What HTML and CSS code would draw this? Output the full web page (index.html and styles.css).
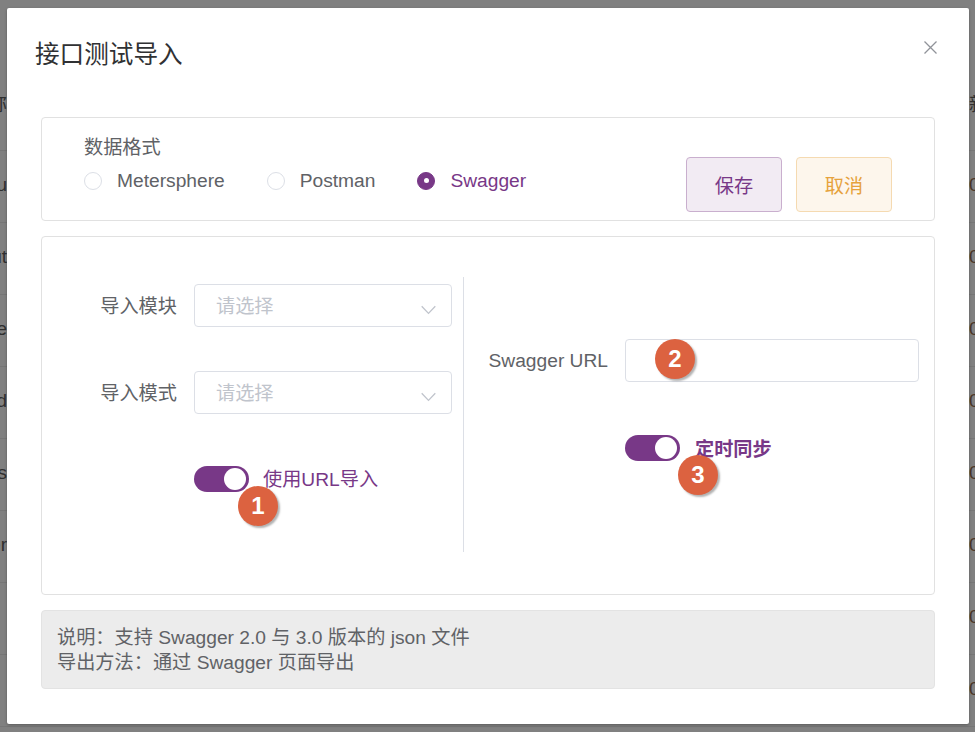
FILE: index.html
```html
<!DOCTYPE html>
<html lang="zh-CN">
<head>
<meta charset="utf-8">
<title>接口测试导入</title>
<link rel="stylesheet" href="styles.css">
</head>
<body>
<div class="page">
  <div class="bg-row bg-head"><span class="bg-l">名称</span><span class="bg-r">新</span></div>
  <div class="bg-row"><span class="bg-l">du</span><span class="bg-r bg-o">0</span></div>
  <div class="bg-row"><span class="bg-l">put</span><span class="bg-r bg-o">0</span></div>
  <div class="bg-row"><span class="bg-l">ame</span><span class="bg-r bg-o">0</span></div>
  <div class="bg-row"><span class="bg-l">add</span><span class="bg-r bg-o">0</span></div>
  <div class="bg-row"><span class="bg-l">tus</span><span class="bg-r bg-o">0</span></div>
  <div class="bg-row"><span class="bg-l">per</span><span class="bg-r bg-o">0</span></div>
  <div class="bg-row"><span class="bg-l"></span><span class="bg-r bg-o">0</span></div>
  <div class="bg-row"><span class="bg-l"></span><span class="bg-r bg-o">0</span></div>
</div>

<div class="dialog">
  <div class="dialog-header">
    <span class="dialog-title">接口测试导入</span>
    <svg class="close" width="13" height="13" viewBox="0 0 13 13"><path d="M0.5 0.5L12.5 12.5M12.5 0.5L0.5 12.5" stroke="#909399" stroke-width="1.3" fill="none"/></svg>
  </div>
  <div class="dialog-body">
    <div class="box box-format">
      <div class="format-left">
        <div class="format-label">数据格式</div>
        <div class="radios">
          <label class="radio"><span class="radio-dot"></span><span class="radio-text">Metersphere</span></label>
          <label class="radio"><span class="radio-dot"></span><span class="radio-text">Postman</span></label>
          <label class="radio checked"><span class="radio-dot"></span><span class="radio-text">Swagger</span></label>
        </div>
      </div>
      <div class="buttons">
        <button class="btn btn-save">保存</button>
        <button class="btn btn-cancel">取消</button>
      </div>
    </div>

    <div class="box box-form">
      <div class="col col-left">
        <div class="form-row">
          <span class="form-label">导入模块</span>
          <div class="select"><span class="placeholder">请选择</span>
            <svg class="arrow" width="15" height="10" viewBox="0 0 15 10"><path d="M0.7 1.2L7.5 8.4L14.3 1.2" stroke="#c0c4cc" stroke-width="1.3" fill="none"/></svg>
          </div>
        </div>
        <div class="form-row row-gap">
          <span class="form-label">导入模式</span>
          <div class="select"><span class="placeholder">请选择</span>
            <svg class="arrow" width="15" height="10" viewBox="0 0 15 10"><path d="M0.7 1.2L7.5 8.4L14.3 1.2" stroke="#c0c4cc" stroke-width="1.3" fill="none"/></svg>
          </div>
        </div>
        <div class="switch-row switch-row-left">
          <span class="switch"><span class="knob"></span><span class="badge badge-1">1</span></span>
          <span class="switch-label">使用URL导入</span>
        </div>
      </div>
      <div class="divider"></div>
      <div class="col col-right">
        <div class="form-row">
          <span class="form-label form-label-wide">Swagger URL</span>
          <div class="input"><span class="badge badge-2">2</span></div>
        </div>
        <div class="switch-row switch-row-right">
          <span class="switch"><span class="knob"></span><span class="badge badge-3">3</span></span>
          <span class="switch-label bold">定时同步</span>
        </div>
      </div>
    </div>

    <div class="note">
      <div>说明：支持 Swagger 2.0 与 3.0 版本的 json 文件</div>
      <div>导出方法：通过 Swagger 页面导出</div>
    </div>
  </div>
</div>
</body>
</html>
```

FILE: styles.css
```css
* { box-sizing: border-box; }
html, body {
  margin: 0;
  padding: 0;
  width: 975px;
  height: 732px;
  overflow: hidden;
  background: #808080;
  font-family: "Liberation Sans", Arial, "Noto Sans CJK SC", sans-serif;
}

/* dimmed page behind the modal */
.page {
  padding-top: 71px;
}
.bg-row {
  height: 72px;
  border-bottom: 1px solid #767676;
  display: flex;
  justify-content: space-between;
  align-items: flex-start;
  padding-top: 24px;
  font-size: 19px;
  line-height: 20px;
  color: #2f2f2f;
}
.bg-head { height: 80px; }
.bg-l {
  width: 7px;
  overflow: hidden;
  display: flex;
  justify-content: flex-end;
  white-space: nowrap;
}
.bg-r {
  width: 6px;
  overflow: hidden;
  white-space: nowrap;
}
.bg-o { color: #4a3626; }

/* dialog */
.dialog {
  position: absolute;
  left: 7px;
  top: 8px;
  width: 962px;
  height: 716px;
  background: #fff;
  border-radius: 2px;
  box-shadow: 0 1px 3px rgba(0,0,0,0.3);
}
.dialog-header {
  position: relative;
  padding: 29px 28px 50px;
}
.dialog-title {
  display: block;
  font-size: 24.6px;
  line-height: 30px;
  color: #303133;
  font-family: "Noto Sans CJK SC", sans-serif;
}
.close {
  position: absolute;
  top: 33px;
  right: 32px;
}
.dialog-body {
  padding: 0 34px;
}

.box {
  border: 1px solid #e1e1e1;
  border-radius: 4px;
}

/* format box */
.box-format {
  display: flex;
  align-items: flex-start;
  justify-content: space-between;
  padding: 16px 42px 8px 42px;
}
.format-label {
  font-size: 19.2px;
  line-height: 25px;
  color: #606266;
  font-family: "Noto Sans CJK SC", sans-serif;
}
.radios {
  display: flex;
  margin-top: 9px;
}
.radio {
  display: flex;
  align-items: center;
  margin-right: 42px;
  font-size: 19.2px;
  line-height: 25px;
  color: #606266;
}
.radio-dot {
  width: 18px;
  height: 18px;
  border: 1px solid #dcdfe6;
  border-radius: 50%;
  background: #fff;
  margin-right: 15px;
  display: flex;
  align-items: center;
  justify-content: center;
}
.radio.checked .radio-dot {
  background: #783887;
  border-color: #783887;
}
.radio.checked .radio-dot::after {
  content: "";
  width: 5px;
  height: 5px;
  border-radius: 50%;
  background: #fff;
}
.radio.checked .radio-text { color: #783887; }

.buttons {
  display: flex;
  gap: 14px;
  margin-top: 23px;
}
.btn {
  width: 96px;
  height: 55px;
  border-radius: 4px;
  font-size: 19.2px;
  font-family: "Noto Sans CJK SC", sans-serif;
  padding: 0;
}
.btn-save {
  background: #f2ebf3;
  border: 1px solid #c9afce;
  color: #783887;
}
.btn-cancel {
  background: #fdf6ec;
  border: 1px solid #f5dab1;
  color: #e6a23c;
}

/* form box */
.box-form {
  margin-top: 15px;
  display: flex;
  padding: 40px 0 42px;
}
.col { height: 275px; }
.col-left {
  width: 421px;
  padding-top: 7px;
}
.divider {
  width: 1px;
  height: 275px;
  background: #dcdfe6;
}
.col-right {
  width: 470px;
  padding-top: 62px;
}
.form-row {
  display: flex;
  align-items: center;
}
.row-gap { margin-top: 44px; }
.form-label {
  width: 152px;
  padding-right: 17px;
  text-align: right;
  font-size: 19.2px;
  line-height: 43px;
  color: #606266;
  font-family: "Noto Sans CJK SC", sans-serif;
}
.form-label-wide {
  width: 161px;
  font-family: "Liberation Sans", Arial, sans-serif;
}
.select {
  position: relative;
  width: 258px;
  height: 43px;
  border: 1px solid #dcdfe6;
  border-radius: 4px;
  display: flex;
  align-items: center;
  padding-left: 21px;
}
.placeholder {
  font-size: 19.2px;
  color: #c0c4cc;
  font-family: "Noto Sans CJK SC", sans-serif;
  line-height: 25px;
}
.arrow {
  position: absolute;
  right: 15px;
  top: 20px;
}
.input {
  position: relative;
  width: 294px;
  height: 43px;
  border: 1px solid #dcdfe6;
  border-radius: 4px;
}

.switch-row {
  display: flex;
  align-items: center;
}
.switch-row-left {
  margin-top: 52px;
  margin-left: 152px;
}
.switch-row-right {
  margin-top: 53px;
  margin-left: 161px;
}
.switch {
  position: relative;
  width: 55px;
  height: 26px;
  border-radius: 13px;
  background: #783887;
  flex: none;
}
.knob {
  position: absolute;
  right: 3px;
  top: 2px;
  width: 22px;
  height: 22px;
  border-radius: 50%;
  background: #fff;
}
.switch-label {
  margin-left: 14px;
  font-size: 19.2px;
  line-height: 25px;
  color: #783887;
}
.switch-label.bold {
  margin-left: 15px;
  font-weight: bold;
  font-family: "Noto Sans CJK SC", sans-serif;
}

.badge {
  position: absolute;
  width: 40px;
  height: 40px;
  border-radius: 50%;
  background: #dc6240;
  color: #fff;
  font-weight: bold;
  font-size: 24px;
  line-height: 40px;
  text-align: center;
  font-family: "Liberation Sans", Arial, sans-serif;
  box-shadow: 2px 2px 2px rgba(0,0,0,0.3);
  z-index: 2;
}
.badge-1 { left: 44px; top: 20px; }
.badge-2 { left: 29px; top: -1px; }
.badge-3 { left: 53px; top: 20px; }

.note {
  margin-top: 15px;
  height: 79px;
  background: #ececec;
  border: 1px solid #e3e3e3;
  border-radius: 4px;
  padding: 14px 15px 0;
  font-size: 19.2px;
  line-height: 25px;
  color: #606266;
}
```
